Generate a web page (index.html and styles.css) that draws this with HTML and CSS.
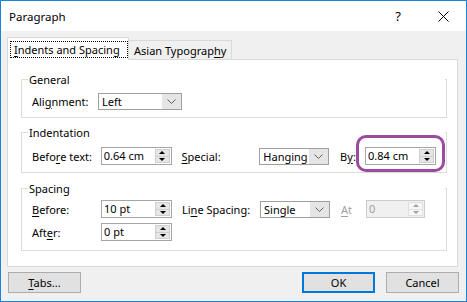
FILE: index.html
```html
<!DOCTYPE html>
<html lang="en">
<head>
    <meta charset="UTF-8">
    <title>Paragraph</title>
    <link rel="stylesheet" href="styles.css">
</head>
<body>
    <div class="dialog">
        <div class="titlebar">
            <span class="title">Paragraph</span>
            <span class="tb-btn help">?</span>
            <span class="tb-btn close">
                <svg width="11" height="11" viewBox="0 0 11 11"><path d="M0.5 0.5L10.5 10.5M10.5 0.5L0.5 10.5" stroke="#000" stroke-width="1" fill="none"/></svg>
            </span>
        </div>

        <div class="content">
            <div class="tabs">
                <div class="tab active"><span class="focus"><u>I</u>ndents and Spacing</span></div>
                <div class="tab">Asian Typograp<u>h</u>y</div>
            </div>

            <div class="panel">
                <!-- General -->
                <div class="group general">
                    <div class="group-title">General</div>
                    <div class="row">
                        <span class="lbl lbl-align">Ali<u>g</u>nment:</span>
                        <div class="select w-align">
                            <span class="val">Left</span>
                            <span class="drop-btn"><svg width="9" height="5" viewBox="0 0 9 5"><path d="M0.5 0.5L4.5 4.5L8.5 0.5" stroke="#606060" fill="none"/></svg></span>
                        </div>
                    </div>
                </div>

                <!-- Indentation -->
                <div class="group indent">
                    <div class="group-title">Indentation</div>
                    <div class="row">
                        <span class="lbl">Befo<u>r</u>e text:</span>
                        <div class="spin">
                            <span class="val">0.64 cm</span>
                            <span class="spin-btns"><span class="sb"><i class="up"></i></span><span class="sb"><i class="down"></i></span></span>
                        </div>
                        <span class="lbl2"><u>S</u>pecial:</span>
                        <div class="select w-mid">
                            <span class="val">Hanging</span>
                            <span class="drop-btn"><svg width="9" height="5" viewBox="0 0 9 5"><path d="M0.5 0.5L4.5 4.5L8.5 0.5" stroke="#606060" fill="none"/></svg></span>
                        </div>
                        <span class="lbl3">B<u>y</u>:</span>
                        <div class="by-wrap">
                            <div class="spin">
                                <span class="val">0.84 cm</span>
                                <span class="spin-btns"><span class="sb"><i class="up"></i></span><span class="sb"><i class="down"></i></span></span>
                            </div>
                            <div class="highlight"></div>
                        </div>
                    </div>
                </div>

                <!-- Spacing -->
                <div class="group spacing">
                    <div class="group-title">Spacing</div>
                    <div class="row">
                        <span class="lbl"><u>B</u>efore:</span>
                        <div class="spin">
                            <span class="val">10 pt</span>
                            <span class="spin-btns"><span class="sb"><i class="up"></i></span><span class="sb"><i class="down"></i></span></span>
                        </div>
                        <span class="lbl2">Li<u>n</u>e Spacing:</span>
                        <div class="select w-mid">
                            <span class="val">Single</span>
                            <span class="drop-btn"><svg width="9" height="5" viewBox="0 0 9 5"><path d="M0.5 0.5L4.5 4.5L8.5 0.5" stroke="#606060" fill="none"/></svg></span>
                        </div>
                        <span class="lbl3 disabled"><u>A</u>t</span>
                        <div class="spin disabled w-at">
                            <span class="val">0</span>
                            <span class="spin-btns"><span class="sb"><i class="up"></i></span><span class="sb"><i class="down"></i></span></span>
                        </div>
                    </div>
                    <div class="row">
                        <span class="lbl">Aft<u>e</u>r:</span>
                        <div class="spin">
                            <span class="val">0 pt</span>
                            <span class="spin-btns"><span class="sb"><i class="up"></i></span><span class="sb"><i class="down"></i></span></span>
                        </div>
                    </div>
                </div>
            </div>

            <div class="footer">
                <button class="btn"><u>T</u>abs...</button>
                <button class="btn default">OK</button>
                <button class="btn cancel">Cancel</button>
            </div>
        </div>
    </div>
</body>
</html>
```

FILE: styles.css
```css
* {
    box-sizing: border-box;
}

body {
    margin: 0;
    font-family: "Noto Sans", "Open Sans", sans-serif;
    font-size: 11px;
    color: #000;
    white-space: nowrap;
}

u {
    text-underline-offset: 2px;
}

.dialog {
    width: 467px;
    height: 302px;
    border: 1px solid #1883d7;
    background: #f0f0f0;
    display: flex;
    flex-direction: column;
}

/* Title bar */
.titlebar {
    height: 30px;
    flex-shrink: 0;
    background: #fff;
    display: flex;
    align-items: center;
}

.title {
    flex: 1;
    padding-left: 8px;
    font-size: 11.5px;
}

.tb-btn {
    height: 30px;
    display: flex;
    align-items: center;
    justify-content: center;
}

.help {
    width: 44px;
    font-size: 13px;
}

.close {
    width: 46px;
}

/* Body */
.content {
    flex: 1;
    display: flex;
    flex-direction: column;
    padding: 6px 8px 0 6px;
}

.tabs {
    height: 22px;
    display: flex;
    align-items: flex-end;
}

.tab {
    width: 103px;
    height: 19px;
    padding-left: 5px;
    border: 1px solid #d9d9d9;
    border-left: none;
    border-bottom: none;
    display: flex;
    align-items: center;
}

.tab.active {
    position: relative;
    z-index: 1;
    width: 122px;
    height: 23px;
    margin-bottom: -1px;
    padding: 3px 0 0 2px;
    align-items: flex-start;
    border-left: 1px solid #d9d9d9;
    background: #fff;
}

.focus {
    width: 118px;
    height: 17px;
    padding-left: 3px;
    border: 1px dotted #000;
    line-height: 15px;
}

.panel {
    height: 208px;
    flex-shrink: 0;
    background: #fff;
    border: 1px solid #d9d9d9;
    padding: 19px 10px 0 13px;
}

/* Group boxes */
.group {
    display: flex;
    flex-direction: column;
    border: 1px solid #dcdcdc;
    border-top: none;
    padding: 0 10px 7px 10px;
}

.indent {
    margin-top: 14px;
}

.spacing {
    margin-top: 15px;
    padding-bottom: 9px;
}

.group-title {
    height: 16px;
    margin: -8px -11px 0 -11px;
    display: flex;
    align-items: center;
}

.group-title::before {
    content: "";
    width: 7px;
    margin-right: 1px;
    border-top: 1px solid #dcdcdc;
}

.group-title::after {
    content: "";
    width: 2px;
    margin-left: auto;
    border-top: 1px solid #dcdcdc;
}

.row {
    height: 18px;
    display: flex;
    align-items: center;
}

.general .row {
    margin-top: 5px;
}

.indent .row {
    margin-top: 7px;
}

.spacing .row {
    margin-top: 5px;
}

.spacing .group-title + .row {
    margin-top: 4px;
}

.lbl {
    width: 69px;
}

.lbl-align {
    width: 66px;
}

.lbl2 {
    width: 78px;
    margin-left: 10px;
}

.lbl3 {
    width: 25px;
    margin-left: 11px;
}

.disabled {
    color: #a0a0a0;
}

/* Dropdowns */
.select {
    height: 17px;
    display: flex;
    border: 1px solid #a0a0a0;
    background: #fff;
}

.w-align {
    width: 84px;
}

.w-mid {
    width: 70px;
}

.select .val {
    flex: 1;
    padding-left: 3px;
    line-height: 15px;
}

.drop-btn {
    width: 19px;
    background: #e5e5e5;
    display: flex;
    align-items: center;
    justify-content: center;
}

/* Spinners */
.spin {
    width: 71px;
    height: 18px;
    display: flex;
    border: 1px solid #a6a6a6;
    background: #fff;
}

.spin .val {
    flex: 1;
    padding-left: 2px;
    line-height: 16px;
}

.spin-btns {
    width: 15px;
    margin: 1px;
    display: flex;
    flex-direction: column;
    border: 1px solid #cfcfcf;
    background: #e6e6e6;
}

.sb {
    flex: 1;
    display: flex;
    align-items: center;
    justify-content: center;
}

.sb + .sb {
    border-top: 1px solid #cfcfcf;
}

.up {
    border-left: 3px solid transparent;
    border-right: 3px solid transparent;
    border-bottom: 3px solid #000;
}

.down {
    border-left: 3px solid transparent;
    border-right: 3px solid transparent;
    border-top: 3px solid #000;
}

.spin.disabled {
    border-color: #cccccc;
    background: #f0f0f0;
}

.spin.disabled .spin-btns {
    background: #f7f7f7;
    border-color: #e0e0e0;
}

.spin.disabled .sb + .sb {
    border-top-color: #e0e0e0;
}

.spin.disabled .up {
    border-bottom-color: #a0a0a0;
}

.spin.disabled .down {
    border-top-color: #a0a0a0;
}

.w-at {
    width: 59px;
}

.by-wrap {
    position: relative;
}

/* Purple annotation ring around the By box */
.highlight {
    position: absolute;
    left: -9px;
    top: -12px;
    width: 89px;
    height: 37px;
    border: 3px solid #9c4a9d;
    border-radius: 10px;
    pointer-events: none;
}

/* Footer buttons */
.footer {
    display: flex;
    margin: 5px -1px 0 1px;
}

.btn {
    width: 73px;
    height: 21px;
    padding: 0;
    font: inherit;
    color: #000;
    background: #e1e1e1;
    border: 1px solid #adadad;
}

.btn.default {
    margin-left: auto;
    border: 2px solid #0078d7;
}

.btn.cancel {
    margin-left: 11px;
}
```
